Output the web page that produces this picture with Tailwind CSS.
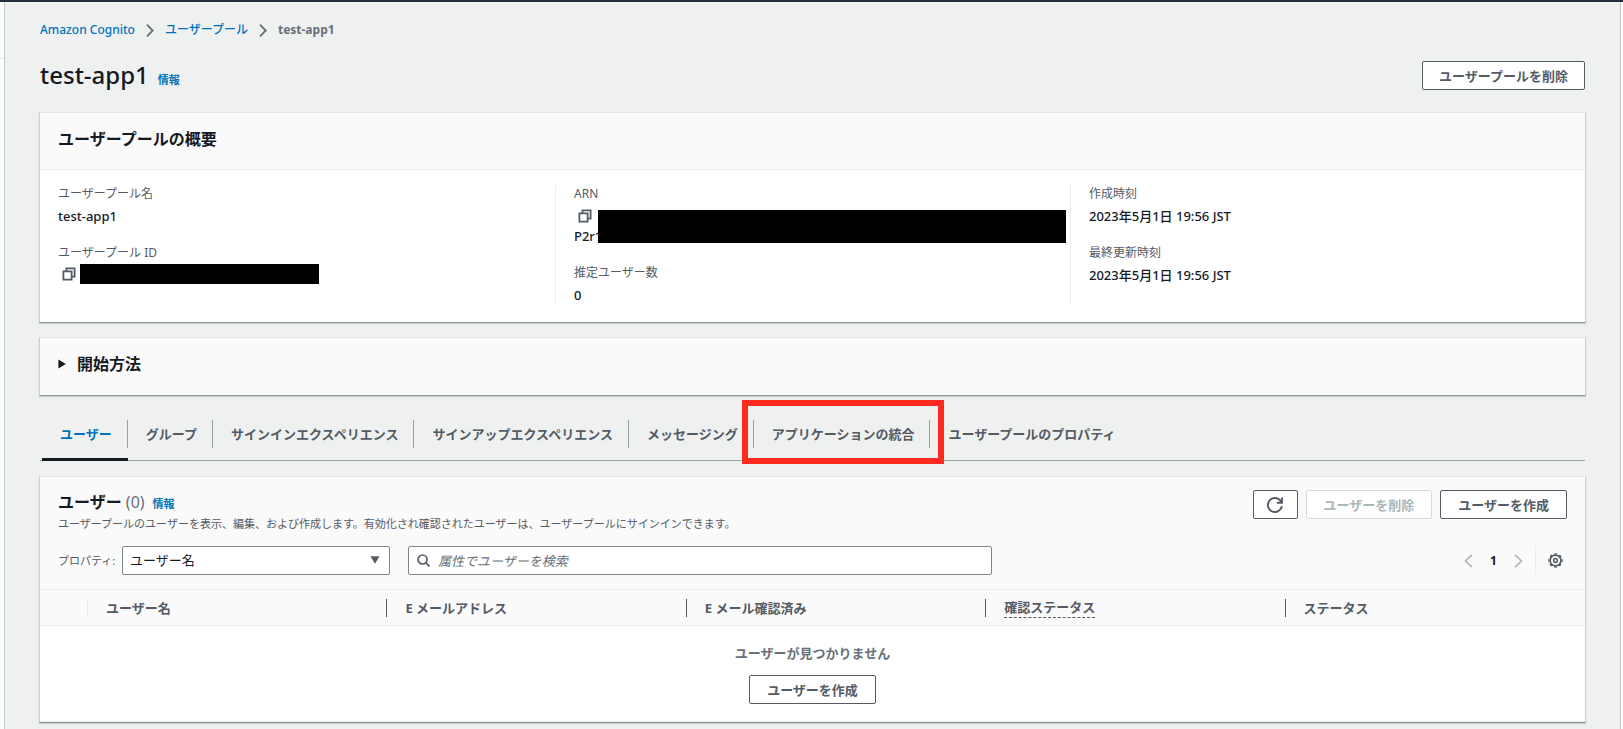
<!DOCTYPE html>
<html lang="ja">
<head>
    <meta charset="UTF-8">
    <meta name="viewport" content="width=device-width, initial-scale=1.0">
    <title>test-app1 - Amazon Cognito</title>
    <script src="https://cdn.jsdelivr.net/npm/@tailwindcss/browser@4"></script>
</head>
<body class="flex min-h-screen flex-col bg-white font-['Noto_Sans','Noto_Sans_CJK_JP',sans-serif] text-[13px] leading-5 text-[#16191f]">

    <header class="h-[2px] bg-[#232f3e]"></header>

    <div class="flex flex-1">
        <!-- Collapsed side navigation -->
        <aside class="w-1 shrink-0">
            <div class="h-[57px] border-b border-[#eaeded]"></div>
        </aside>

        <main class="mr-[2px] min-w-0 flex-1 border-x border-[#c3cacb] bg-[#eff1f1] px-[34px] pt-[18px] pb-1">

            <nav aria-label="Breadcrumb" class="px-px text-xs leading-5 font-medium">
                <ol class="flex items-center gap-[11px]">
                    <li><a href="#" class="text-[#0073bb]">Amazon Cognito</a></li>
                    <li aria-hidden="true"><svg class="h-[13px] w-2" viewBox="0 0 8 13" fill="none" stroke="#687078" stroke-width="1.9"><path d="M1 .7 6.7 6.5 1 12.3"/></svg></li>
                    <li><a href="#" class="text-[#0073bb]">ユーザープール</a></li>
                    <li aria-hidden="true"><svg class="h-[13px] w-2" viewBox="0 0 8 13" fill="none" stroke="#687078" stroke-width="1.9"><path d="M1 .7 6.7 6.5 1 12.3"/></svg></li>
                    <li class="font-bold text-[#687078]">test-app1</li>
                </ol>
            </nav>

            <div class="mt-[21px] flex items-center justify-between px-px">
                <div class="flex items-baseline gap-[9px]">
                    <h1 class="text-2xl leading-7 font-medium">test-app1</h1>
                    <a href="#" class="text-[11px] font-bold text-[#0073bb]">情報</a>
                </div>
                <button type="button" class="h-[29px] rounded-[2px] border border-[#545b64] bg-white px-4 font-bold text-[#545b64]">ユーザープールを削除</button>
            </div>

            <!-- Overview -->
            <section class="mt-[22px] border border-x-[#c8cfcf] border-t-[#e3e7e7] border-b-[#879596] bg-white shadow-[0_1px_1px_0_rgba(0,28,36,0.15)]">
                <h2 class="border-b border-[#eaeded] bg-[#fafafa] px-[18px] pt-[14px] pb-[18px] text-base leading-6 font-bold">ユーザープールの概要</h2>
                <div class="grid grid-cols-3 pt-[15px] pb-[17px]">
                    <dl class="px-[18px]">
                        <dt class="text-xs leading-[18px] text-[#545b64]">ユーザープール名</dt>
                        <dd class="mt-[3px] font-medium">test-app1</dd>
                        <dt class="mt-[18px] text-xs leading-[18px] text-[#545b64]">ユーザープール ID</dt>
                        <dd class="mt-[2px] flex h-5 items-center gap-1 pl-[4px]">
                            <button type="button" aria-label="コピー">
                                <svg class="h-[14px] w-[14px]" viewBox="0 0 14 14" fill="none" stroke="#545b64" stroke-width="1.8"><path d="M1.4 4.4h8.2v8.2H1.4zM4.4 4.2V1.4h8.2v8.2H9.8"/></svg>
                            </button>
                            <span class="h-5 w-[239px] bg-black"></span>
                        </dd>
                    </dl>
                    <dl class="border-l border-[#eaeded] px-[18px]">
                        <dt class="text-xs leading-[18px] text-[#545b64]">ARN</dt>
                        <dd class="relative mt-[3px] font-medium">
                            <div class="flex h-5 items-center pl-[4px]">
                                <button type="button" aria-label="コピー">
                                    <svg class="h-[14px] w-[14px]" viewBox="0 0 14 14" fill="none" stroke="#545b64" stroke-width="1.8"><path d="M1.4 4.4h8.2v8.2H1.4zM4.4 4.2V1.4h8.2v8.2H9.8"/></svg>
                                </button>
                            </div>
                            <div>P2r1</div>
                            <span class="absolute top-1 -right-[14px] left-6 h-[33px] bg-black"></span>
                        </dd>
                        <dt class="mt-[18px] text-xs leading-[18px] text-[#545b64]">推定ユーザー数</dt>
                        <dd class="mt-[3px] font-medium">0</dd>
                    </dl>
                    <dl class="border-l border-[#eaeded] px-[18px]">
                        <dt class="text-xs leading-[18px] text-[#545b64]">作成時刻</dt>
                        <dd class="mt-[3px] font-medium">2023年5月1日 19:56 JST</dd>
                        <dt class="mt-[18px] text-xs leading-[18px] text-[#545b64]">最終更新時刻</dt>
                        <dd class="mt-[3px] font-medium">2023年5月1日 19:56 JST</dd>
                    </dl>
                </div>
            </section>

            <!-- Getting started, collapsed -->
            <section class="mt-[14px] border border-x-[#c8cfcf] border-t-[#e3e7e7] border-b-[#879596] bg-[#fafafa] shadow-[0_1px_1px_0_rgba(0,28,36,0.15)]">
                <h2>
                    <button type="button" aria-expanded="false" class="flex w-full items-center gap-[11px] px-[18px] pt-[14px] pb-[19px] text-base leading-6 font-bold">
                        <svg class="h-[10px] w-2" viewBox="0 0 8 10" fill="#16191f"><path d="M.4.4v9.2L7.8 5z"/></svg>
                        開始方法
                    </button>
                </h2>
            </section>

            <!-- Tabs -->
            <div role="tablist" class="mx-px flex border-b border-[#95a5a6] pt-[10px] pl-[2px] font-bold text-[#545b64]">
                <button type="button" role="tab" aria-selected="true" class="-mb-px border-b-[3px] border-[#16191f] pt-[14px] pb-[10px] text-[#0073bb]"><span class="block border-r border-[#95a5a6] py-[4px] pr-[15px] pl-[18px]">ユーザー</span></button>
                <button type="button" role="tab" class="pt-[14px] pb-3"><span class="block border-r border-[#95a5a6] py-[4px] pr-[15px] pl-[18px]">グループ</span></button>
                <button type="button" role="tab" class="pt-[14px] pb-3"><span class="block border-r border-[#95a5a6] py-[4px] pr-[15px] pl-[18px]">サインインエクスペリエンス</span></button>
                <button type="button" role="tab" class="pt-[14px] pb-3"><span class="block border-r border-[#95a5a6] py-[4px] pr-[15px] pl-[18px]">サインアップエクスペリエンス</span></button>
                <button type="button" role="tab" class="pt-[14px] pb-3"><span class="block border-r border-[#95a5a6] py-[4px] pr-[15px] pl-[18px]">メッセージング</span></button>
                <button type="button" role="tab" class="relative pt-[14px] pb-3">
                    <span class="block border-r border-[#95a5a6] py-[4px] pr-[15px] pl-[18px]">アプリケーションの統合</span>
                    <!-- Highlight frame -->
                    <span class="absolute -top-[6px] -right-[14px] -bottom-1 -left-[12px] border-[6px] border-[#ff2a1f]"></span>
                </button>
                <button type="button" role="tab" class="pt-[14px] pb-3"><span class="block py-[4px] pr-[15px] pl-[18px]">ユーザープールのプロパティ</span></button>
            </div>

            <!-- Users -->
            <section class="mt-[15px] border border-x-[#c8cfcf] border-t-[#e3e7e7] border-b-[#879596] bg-white shadow-[0_1px_1px_0_rgba(0,28,36,0.15)]">
                <div class="bg-[#fafafa] px-[18px] pt-[13px] pb-[14px]">
                    <div class="flex items-start justify-between">
                        <div>
                            <div class="flex items-baseline">
                                <h2 class="text-base leading-6 font-bold">ユーザー <span class="font-normal text-[#687078]">(0)</span></h2>
                                <a href="#" class="ml-2 text-[11px] font-bold text-[#0073bb]">情報</a>
                            </div>
                            <p class="mt-[2px] text-[11px] leading-4 text-[#545b64]">ユーザープールのユーザーを表示、編集、および作成します。有効化され確認されたユーザーは、ユーザープールにサインインできます。</p>
                        </div>
                        <div class="flex gap-2">
                            <button type="button" aria-label="更新" class="flex h-[29px] w-[45px] items-center justify-center rounded-[2px] border border-[#545b64] bg-white">
                                <svg class="h-4 w-4" viewBox="0 0 16 16" fill="none" stroke="#545b64" stroke-width="1.9"><path d="M14.8 9.2A7 7 0 1 1 13.4 3.7L14.8 5.4"/><path d="M15 .6v5.1H9.9"/></svg>
                            </button>
                            <button type="button" disabled class="h-[29px] rounded-[2px] border border-[#d5dbdb] bg-white px-[17px] font-bold text-[#aab7b8]">ユーザーを削除</button>
                            <button type="button" class="h-[29px] rounded-[2px] border border-[#545b64] bg-white px-[17px] font-bold text-[#545b64]">ユーザーを作成</button>
                        </div>
                    </div>

                    <div class="mt-[14px] flex items-center">
                        <label for="property" class="w-16 shrink-0 text-[11px] text-[#545b64]">プロパティ:</label>
                        <div class="relative w-[268px] shrink-0">
                            <select id="property" class="h-[29px] w-full appearance-none rounded-[2px] border border-[#7b8889] bg-white px-[7px] pb-[2px]">
                                <option>ユーザー名</option>
                            </select>
                            <svg class="pointer-events-none absolute top-[10px] right-[10px] h-2 w-[10px]" viewBox="0 0 10 8" fill="#545b64"><path d="M.4.3h9.2L5 7.8z"/></svg>
                        </div>
                        <div class="relative ml-[18px] w-[584px]">
                            <svg class="absolute top-[8px] left-[9px] h-[13px] w-[13px]" viewBox="0 0 13 13" fill="none" stroke="#545b64" stroke-width="1.7"><circle cx="5.5" cy="5.5" r="4.5"/><path d="m8.7 8.7 3.8 3.8"/></svg>
                            <input type="search" aria-label="属性でユーザーを検索" placeholder="属性でユーザーを検索" class="h-[29px] w-full rounded-[2px] border border-[#7b8889] bg-white pr-2 pl-[29px] placeholder:text-[#687078] placeholder:italic">
                        </div>
                        <div class="ml-auto flex items-center">
                            <button type="button" disabled aria-label="前のページ"><svg class="h-[14px] w-[9px]" viewBox="0 0 9 14" fill="none" stroke="#aab7b8" stroke-width="1.7"><path d="M8 .8 1.5 7 8 13.2"/></svg></button>
                            <button type="button" class="w-[41px] text-xs font-bold">1</button>
                            <button type="button" disabled aria-label="次のページ"><svg class="h-[14px] w-[9px]" viewBox="0 0 9 14" fill="none" stroke="#aab7b8" stroke-width="1.7"><path d="M1 .8 7.5 7 1 13.2"/></svg></button>
                            <span class="mr-3 ml-3 h-[29px] w-px bg-[#eaeded]"></span>
                            <button type="button" aria-label="設定" class="mr-1">
                                <svg class="h-[15px] w-[15px]" viewBox="0 0 15 15" fill="none" stroke="#545b64"><circle cx="7.5" cy="7.5" r="5.4" stroke-width="1.7"/><circle cx="7.5" cy="7.5" r="6.6" stroke-width="1.3" stroke-dasharray="2.59 2.59" stroke-dashoffset="1.3"/><circle cx="7.5" cy="7.5" r="1.9" stroke-width="1.5"/></svg>
                            </button>
                        </div>
                    </div>
                </div>

                <table class="w-full table-fixed border-y border-[#eaeded] text-left">
                    <thead class="bg-[#fafafa] text-[#545b64]">
                        <tr class="h-9 border-b border-[#eaeded]">
                            <th class="w-12"><span class="block h-[18px] border-r border-[#eaeded]"></span></th>
                            <th><span class="block border-r border-[#545b64] pl-[18px] leading-[18px]">ユーザー名</span></th>
                            <th><span class="block border-r border-[#545b64] pl-[18px] leading-[18px]">E メールアドレス</span></th>
                            <th><span class="block border-r border-[#545b64] pl-[18px] leading-[18px]">E メール確認済み</span></th>
                            <th><span class="block h-[18px] border-r border-[#545b64] pl-[18px] leading-4"><span class="inline-block border-b border-dashed border-[#545b64] pb-[2px]">確認ステータス</span></span></th>
                            <th><span class="block pl-[18px] leading-[18px]">ステータス</span></th>
                        </tr>
                    </thead>
                    <tbody>
                        <tr>
                            <td colspan="6" class="pt-[17px] pb-[17px] text-center">
                                <p class="font-bold text-[#687078]">ユーザーが見つかりません</p>
                                <button type="button" class="mt-3 h-[29px] rounded-[2px] border border-[#545b64] bg-white px-[17px] font-bold text-[#545b64]">ユーザーを作成</button>
                            </td>
                        </tr>
                    </tbody>
                </table>
            </section>
        </main>
    </div>

</body>
</html>
